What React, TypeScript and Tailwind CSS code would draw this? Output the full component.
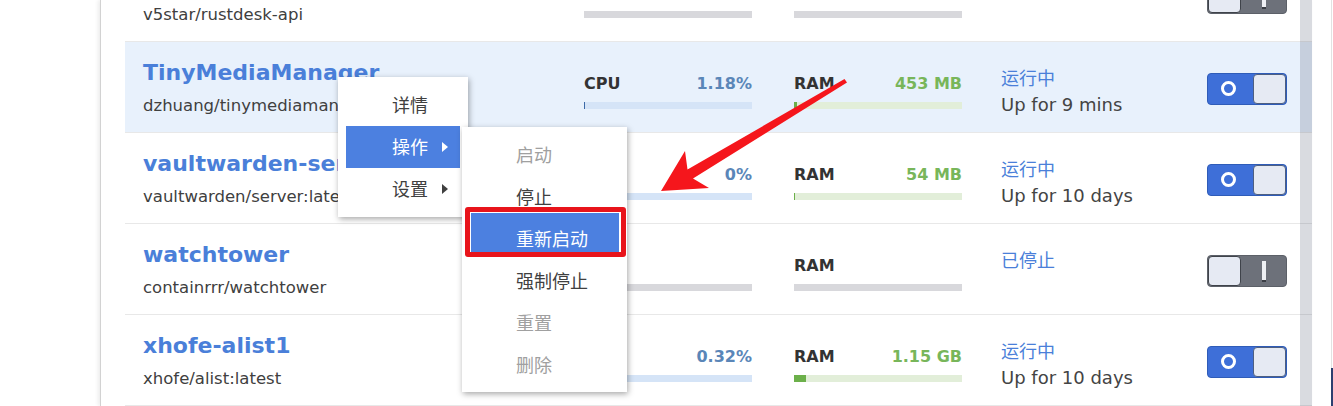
import React from "react";

type Row = {
  name: string;
  image: string;
  running: boolean;
  cpu: string;
  ram: string;
  cpuFill: number;
  ramFill: number;
  status: string;
  uptime: string;
  active?: boolean;
};

const rows: Row[] = [
  { name: "rustdesk-api", image: "v5star/rustdesk-api", running: false, cpu: "", ram: "", cpuFill: 0, ramFill: 0, status: "已停止", uptime: "" },
  { name: "TinyMediaManager", image: "dzhuang/tinymediamanager:latest", running: true, cpu: "1.18%", ram: "453 MB", cpuFill: 1, ramFill: 3, status: "运行中", uptime: "Up for 9 mins", active: true },
  { name: "vaultwarden-server", image: "vaultwarden/server:latest", running: true, cpu: "0%", ram: "54 MB", cpuFill: 0, ramFill: 1, status: "运行中", uptime: "Up for 10 days" },
  { name: "watchtower", image: "containrrr/watchtower", running: false, cpu: "", ram: "", cpuFill: 0, ramFill: 0, status: "已停止", uptime: "" },
  { name: "xhofe-alist1", image: "xhofe/alist:latest", running: true, cpu: "0.32%", ram: "1.15 GB", cpuFill: 1, ramFill: 12, status: "运行中", uptime: "Up for 10 days" },
];

function Toggle({ on }: { on: boolean }) {
  if (on) {
    return (
      <div className="flex h-[32px] w-[80px] rounded-[4px] border border-[#2f5cb8] bg-[#3e6fd8]">
        <div className="flex flex-1 items-center pl-[13px]">
          <span className="h-[15px] w-[15px] rounded-full border-[3px] border-white bg-[#3e6fd8]" />
        </div>
        <div className="w-[33px] rounded-[4px] border border-[#4d5f82] bg-[#e6eaf3]" />
      </div>
    );
  }
  return (
    <div className="flex h-[32px] w-[80px] rounded-[4px] border border-[#5c6068] bg-[#6d717a]">
      <div className="w-[33px] rounded-[4px] border border-[#3f434a] bg-[#e6eaf3]" />
      <div className="flex flex-1 items-center justify-center">
        <span className="h-[19px] w-[4px] bg-[#eef0f4] shadow-[0_2px_0_#3a3d44]" />
      </div>
    </div>
  );
}

function Meter({ label, value, fill, running, kind }: { label: string; value: string; fill: number; running: boolean; kind: "cpu" | "ram" }) {
  const track = !running ? "bg-[#d8d8dc]" : kind === "cpu" ? "bg-[#d5e4f7]" : "bg-[#e2eed9]";
  const bar = kind === "cpu" ? "bg-[#3c6aa8]" : "bg-[#6cb04a]";
  const valueColor = kind === "cpu" ? "text-[#5a86b8]" : "text-[#78b65a]";
  return (
    <div className="w-[168px] pt-[32px]">
      <div className="flex h-[20px] items-center justify-between text-[16px] font-bold leading-[20px]">
        <span className="text-[#333]">{label}</span>
        <span className={valueColor}>{value}</span>
      </div>
      <div className={`mt-[8px] h-[7px] ${track}`}>
        {running && fill > 0 && <div className={`h-full ${bar}`} style={{ width: fill }} />}
      </div>
    </div>
  );
}

function ContainerRow({ row }: { row: Row }) {
  return (
    <div
      className={`flex h-[91px] border-b border-[#e8e8e8] pl-[18px] pr-[25px] ${
        row.active ? "bg-[#e8f1fc]" : "bg-white"
      }`}
    >
      <div className="w-[441px] pt-[17px]">
        <div className="text-[22px] font-bold leading-[28px] text-[#4a7fd9]">{row.name}</div>
        <div className="mt-[8px] whitespace-nowrap text-[16.5px] leading-[22px] text-[#404040]">{row.image}</div>
      </div>
      <Meter label="CPU" value={row.cpu} fill={row.cpuFill} running={row.running} kind="cpu" />
      <div className="w-[42px]" />
      <Meter label="RAM" value={row.ram} fill={row.ramFill} running={row.running} kind="ram" />
      <div className="ml-[39px] flex-1 pt-[24px] text-[18px] leading-[26px]">
        <div className="text-[#4a7fd9]">{row.status}</div>
        {row.uptime && <div className="text-[#444]">{row.uptime}</div>}
      </div>
      <div className="flex items-center pt-[3px]">
        <Toggle on={row.running} />
      </div>
    </div>
  );
}

function Caret({ color }: { color: string }) {
  return <span className={`ml-auto mr-[12px] h-0 w-0 border-y-[5px] border-l-[6px] border-y-transparent ${color}`} />;
}

export default function App() {
  return (
    <div className="relative h-[406px] w-[1333px] overflow-hidden bg-white font-['DejaVu_Sans','Noto_Sans_CJK_SC',sans-serif]">
      <div className="flex h-full">
        <div className="w-[100px] shrink-0" />
        {/* panel */}
        <div className="relative flex w-[1212px] shrink-0 border-l border-[#d2d2d2] shadow-[-2px_0_4px_rgba(0,0,0,0.08)]">
          <div className="mt-[-49px] flex-1 pl-[24px]">
            {rows.map((r) => (
              <ContainerRow key={r.name} row={r} />
            ))}
          </div>
          {/* scrollbar */}
          <div className="absolute bottom-0 right-0 top-0 w-[12px] bg-[#2a3a55]/[0.18]" />
        </div>
        <div className="flex flex-1 justify-end">
          <div className="flex w-[2px] flex-col">
            <div className="flex-1 border-l border-[#e2e2e2]" />
            <div className="h-[38px] bg-[#2c3f70]" />
          </div>
        </div>
      </div>

      {/* context menu */}
      <div className="absolute left-[338px] top-[77px] w-[130px] bg-white py-[7px] text-[18px] text-[#404040] shadow-[1px_2px_6px_rgba(0,0,0,0.35)]">
        <div className="flex h-[42px] items-center px-[8px]">
          <span className="pl-[46px]">详情</span>
        </div>
        <div className="mx-[8px] flex h-[42px] items-center bg-[#4c80e0] text-white">
          <span className="pl-[46px]">操作</span>
          <Caret color="border-l-white" />
        </div>
        <div className="flex h-[42px] items-center px-[8px]">
          <span className="pl-[46px]">设置</span>
          <Caret color="border-l-[#404040]" />
        </div>
      </div>

      {/* submenu */}
      <div className="absolute left-[462px] top-[127px] w-[165px] bg-white pb-[6px] pt-[7px] text-[18px] text-[#404040] shadow-[1px_2px_6px_rgba(0,0,0,0.35)]">
        <div className="flex h-[42px] items-center pl-[54px] text-[#a0a0a0]">启动</div>
        <div className="flex h-[42px] items-center pl-[54px]">停止</div>
        <div className="relative flex h-[42px] items-center pl-[54px] text-white">
          <span className="absolute left-[9px] right-[8px] top-[-5px] h-[40px] bg-[#4c80e0]" />
          <span className="relative">重新启动</span>
        </div>
        <div className="flex h-[42px] items-center pl-[54px]">强制停止</div>
        <div className="flex h-[42px] items-center pl-[54px] text-[#a0a0a0]">重置</div>
        <div className="flex h-[42px] items-center pl-[54px] text-[#a0a0a0]">删除</div>
      </div>

      {/* annotation box */}
      <div className="absolute left-[465px] top-[207px] h-[50px] w-[161px] rounded-[3px] border-[5px] border-[#e8141b]" />

      {/* annotation arrow */}
      <svg className="pointer-events-none absolute inset-0" width="1333" height="406" viewBox="0 0 1333 406">
        <polygon
          points="661,191 685,151 687.5,169.5 844.5,79 847,82.5 693,178.5 709,188"
          fill="#f5161c"
        />
      </svg>
    </div>
  );
}
